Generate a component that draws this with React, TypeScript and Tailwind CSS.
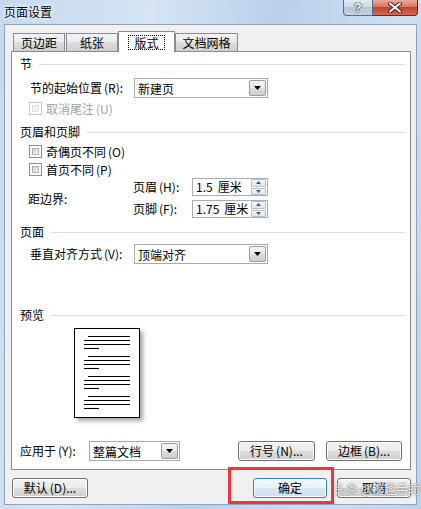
import type { ReactNode } from 'react';

const font = "font-['Noto_Sans_CJK_SC','Liberation_Sans',sans-serif]";

// accelerator keys are hidden on Win7 until Alt is pressed, so no underline
function Key({ k }: { k: string }) {
  return <span className="ml-[2px]">({k})</span>;
}

function SectionHeader({ title }: { title: string }) {
  return (
    <div className="flex items-center h-[14px]">
      <span>{title}</span>
      <div className="flex-1 h-px bg-[#d5dfe5] ml-[7px]" />
    </div>
  );
}

function CheckBox({ label, disabled }: { label: ReactNode; disabled?: boolean }) {
  return (
    <div className={`flex items-center h-[13px] ml-[9px] ${disabled ? 'text-[#a0a0a0]' : ''}`}>
      <span
        className={`w-[13px] h-[13px] border p-[2px] bg-white ${
          disabled ? 'border-[#c8c8c8]' : 'border-[#8e8f8f]'
        }`}
      >
        <span
          className={`block w-full h-full border ${
            disabled
              ? 'border-[#e0e0e0] bg-[#f4f4f4]'
              : 'border-[#aeb3b9] bg-[linear-gradient(135deg,#cbcfd5,#f6f6f6)]'
          }`}
        />
      </span>
      <span className="ml-[4px]">{label}</span>
    </div>
  );
}

function Combo({ value, w }: { value: string; w: string }) {
  return (
    <div className={`${w} h-[20px] border border-[#a5acb5] bg-white flex items-center`}>
      <span className="flex-1 pl-[3px] pt-px">{value}</span>
      <span className="w-[17px] h-[16px] mr-px border border-[#9d9d9d] rounded-[2px] bg-[linear-gradient(to_bottom,#f2f2f2_0%,#ebebeb_50%,#dddddd_50%,#cfcfcf_100%)] flex items-center justify-center">
        <svg width="7" height="4" viewBox="0 0 7 4">
          <path d="M0 0h7L3.5 4z" fill="#000" />
        </svg>
      </span>
    </div>
  );
}

function Spin({ num }: { num: string }) {
  return (
    <div className="w-[76px] h-[18px] border border-[#abadb3] bg-white flex items-center">
      <span className="flex-1 pl-[3px] whitespace-nowrap">
        {num}
        <span className="ml-[5px]">厘米</span>
      </span>
      <span className="w-[15px] h-[16px] flex flex-col gap-px mr-px">
        {[0, 1].map((i) => (
          <span
            key={i}
            className="flex-1 border border-[#b5c0cc] rounded-[1px] bg-[linear-gradient(to_bottom,#f6f8fb,#dde5ee)] flex items-center justify-center"
          >
            <svg width="5" height="3" viewBox="0 0 5 3">
              <path d={i === 0 ? 'M0 3h5L2.5 0z' : 'M0 0h5L2.5 3z'} fill="#3a5a86" />
            </svg>
          </span>
        ))}
      </span>
    </div>
  );
}

function Btn({ children, w, def }: { children: ReactNode; w: string; def?: boolean }) {
  return (
    <div
      className={`${w} h-[20px] rounded-[3px] border flex items-center justify-center shadow-[inset_0_0_0_1px_#fcfcfc] ${
        def
          ? 'border-[#3c7fb1] bg-[linear-gradient(to_bottom,#f2f8fc_0%,#e6f1f8_50%,#d8e8f3_50%,#cfe2ef_100%)]'
          : 'border-[#707070] bg-[linear-gradient(to_bottom,#f2f2f2_0%,#ebebeb_50%,#dddddd_50%,#cfcfcf_100%)]'
      }`}
    >
      {children}
    </div>
  );
}

function Tab({ label, w, active }: { label: string; w: string; active?: boolean }) {
  if (active) {
    return (
      <div className={`${w} h-[21px] -mb-px relative z-10 border border-b-0 border-[#898c95] bg-white flex items-start justify-center pt-[3px]`}>
        <span className="border border-dotted border-black px-[5px] leading-[13px]">{label}</span>
      </div>
    );
  }
  return (
    <div
      className={`${w} h-[18px] border border-b-0 border-[#898c95] bg-[linear-gradient(to_bottom,#f3f3f3_0%,#ebebeb_50%,#dddddd_50%,#cfcfcf_100%)] flex items-center justify-center pt-px`}
    >
      {label}
    </div>
  );
}

function PreviewPage() {
  const groups = [0, 1, 2, 3];
  return (
    <div className="w-[66px] h-[90px] border border-black bg-white shadow-[3px_3px_4px_rgba(0,0,0,0.35)] ml-[54px] mt-[6px]">
      <svg width="64" height="88" viewBox="0 0 64 88">
        {groups.map((g) => {
          const y = 7.5 + g * 20;
          return (
            <g key={g} stroke="#000" strokeWidth="1.1">
              <line x1="13" x2="55" y1={y} y2={y} />
              <line x1="9" x2="55" y1={y + 4} y2={y + 4} />
              <line x1="9" x2="55" y1={y + 8} y2={y + 8} />
              <line x1="9" x2="24" y1={y + 12} y2={y + 12} />
            </g>
          );
        })}
      </svg>
    </div>
  );
}

export default function App() {
  return (
    <div
      className={`${font} text-[12px] leading-[14px] text-black w-[421px] h-[509px] relative flex flex-col bg-[linear-gradient(100deg,#c5d9ee_0%,#d6e4f3_30%,#b9d0ea_55%,#cfdff1_80%,#bcd2ea_100%)]`}
    >
      {/* Title bar */}
      <div className="h-[24px] flex items-start">
        <span className="ml-[4px] mt-[5px] text-[12px] leading-[14px] [text-shadow:0_0_6px_#fff,0_0_3px_#fff]">页面设置</span>
        <div className="ml-auto mr-[3px] flex">
          <div className="w-[30px] h-[16px] border border-t-0 border-[#5e6f84] rounded-bl-[4px] bg-[linear-gradient(to_bottom,#e3ebf4_0%,#c9d6e5_50%,#b4c5d8_50%,#c4d3e3_100%)] flex items-center justify-center">
            <span className="text-[12px] font-bold leading-[12px] text-white [text-shadow:0_0_1px_#2b3b4f,0_0_1px_#2b3b4f,0_0_2px_#2b3b4f] font-['Liberation_Sans',sans-serif]">?</span>
          </div>
          <div className="w-[45px] h-[16px] border border-t-0 border-l-0 border-[#5e2a22] rounded-br-[4px] bg-[linear-gradient(to_bottom,#e9a99b_0%,#d4705e_50%,#c2432f_50%,#d76a4f_100%)] flex items-center justify-center">
            <svg width="14" height="11" viewBox="0 0 14 11">
              <path d="M2 1.5 12 9.5M12 1.5 2 9.5" stroke="#4a1a14" strokeWidth="4" strokeLinecap="round" />
              <path d="M2 1.5 12 9.5M12 1.5 2 9.5" stroke="#fff" strokeWidth="2.2" strokeLinecap="round" />
            </svg>
          </div>
        </div>
      </div>

      {/* Client area */}
      <div className="mx-[4px] h-[481px] bg-[#f0f0f0] border border-[#8fa3bd] flex flex-col">
        {/* Tabs */}
        <div className="mt-[6px] ml-[8px] h-[20px] flex items-end">
          <Tab label="页边距" w="w-[52px]" />
          <div className="w-[1px]" />
          <Tab label="纸张" w="w-[52px]" />
          <Tab label="版式" w="w-[57px]" active />
          <Tab label="文档网格" w="w-[63px]" />
        </div>

        {/* Panel */}
        <div className="ml-[6px] w-[400px] h-[419px] border border-[#898c95] bg-white flex flex-col pt-[5px] pl-[8px] pr-[5px]">
          <SectionHeader title="节" />
          <div className="mt-[7px] ml-[10px] h-[20px] flex items-center">
            <span className="w-[104px]">
              节的起始位置<Key k="R" />:
            </span>
            <Combo value="新建页" w="w-[134px]" />
          </div>
          <div className="mt-[4px]">
            <CheckBox label={<>取消尾注<Key k="U" /></>} disabled />
          </div>

          <div className="mt-[10px]">
            <SectionHeader title="页眉和页脚" />
          </div>
          <div className="mt-[6px]">
            <CheckBox label={<>奇偶页不同<Key k="O" /></>} />
          </div>
          <div className="mt-[5px]">
            <CheckBox label={<>首页不同<Key k="P" /></>} />
          </div>
          <div className="mt-[2px] ml-[8px] flex items-center">
            <span className="w-[105px] pt-px">距边界:</span>
            <div className="flex flex-col gap-[4px]">
              <div className="flex items-center h-[18px]">
                <span className="w-[59px]">
                  页眉<Key k="H" />:
                </span>
                <Spin num="1.5" />
              </div>
              <div className="flex items-center h-[18px]">
                <span className="w-[59px]">
                  页脚<Key k="F" />:
                </span>
                <Spin num="1.75" />
              </div>
            </div>
          </div>

          <div className="mt-[7px]">
            <SectionHeader title="页面" />
          </div>
          <div className="mt-[5px] ml-[10px] h-[20px] flex items-center">
            <span className="w-[104px]">
              垂直对齐方式<Key k="V" />:
            </span>
            <Combo value="顶端对齐" w="w-[134px]" />
          </div>

          <div className="mt-[44px]">
            <SectionHeader title="预览" />
          </div>
          <PreviewPage />

          <div className="mt-[23px] h-[20px] flex items-center">
            <span className="w-[69px]">
              应用于<Key k="Y" />:
            </span>
            <Combo value="整篇文档" w="w-[91px]" />
            <div className="ml-[58px]">
              <Btn w="w-[77px]">
                行号<Key k="N" />...
              </Btn>
            </div>
            <div className="ml-[11px]">
              <Btn w="w-[76px]">
                边框<Key k="B" />...
              </Btn>
            </div>
          </div>
        </div>

        {/* Bottom buttons */}
        <div className="mt-[8px] ml-[7px] flex items-center">
          <Btn w="w-[76px]">
            默认<Key k="D" />...
          </Btn>
          <div className="ml-[165px]">
            <Btn w="w-[74px]" def>
              确定
            </Btn>
          </div>
          <div className="ml-[10px]">
            <Btn w="w-[74px]">取消</Btn>
          </div>
        </div>
      </div>

      {/* Annotation overlay */}
      <div className="absolute left-[228px] top-[467px] w-[106px] h-[37px] border-[3px] border-[#e8383d]" />
      <div className="absolute left-[334px] top-[482px] text-[12px] leading-[14px] text-white/85 [text-shadow:0_0_2px_rgba(0,0,0,0.7)]">
        头条 @秘趣手助
      </div>
    </div>
  );
}
